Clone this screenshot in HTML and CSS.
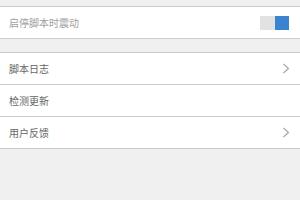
FILE: index.html
```html
<!DOCTYPE html>
<html>
<head>
<meta charset="utf-8">
<link rel="stylesheet" href="styles.css">
</head>
<body>
<div class="page">
  <div class="group">
    <div class="row">
      <span class="label muted">启停脚本时震动</span>
      <span class="toggle"><span class="knob"></span></span>
    </div>
  </div>
  <div class="group">
    <div class="row">
      <span class="label">脚本日志</span>
      <svg class="chev" width="8" height="11" viewBox="0 0 8 11"><path d="M1.5 1 L6.5 5.5 L1.5 10" fill="none" stroke="#a8a8a8" stroke-width="1.2"/></svg>
    </div>
    <div class="row">
      <span class="label">检测更新</span>
    </div>
    <div class="row">
      <span class="label">用户反馈</span>
      <svg class="chev" width="8" height="11" viewBox="0 0 8 11"><path d="M1.5 1 L6.5 5.5 L1.5 10" fill="none" stroke="#a8a8a8" stroke-width="1.2"/></svg>
    </div>
  </div>
</div>
</body>
</html>
```
FILE: styles.css
```css
html, body {
  margin: 0;
  padding: 0;
  background: #f0f0f0;
}
body {
  font-family: "Noto Sans CJK SC", "Noto Sans", sans-serif;
  width: 300px;
  height: 200px;
  overflow: hidden;
}
.page {
  padding-top: 6px;
  display: flex;
  flex-direction: column;
  gap: 13px;
}
.group {
  background: #fff;
  border-top: 1px solid #cccccc;
}
.row {
  height: 31px;
  border-bottom: 1px solid #cccccc;
  display: flex;
  align-items: center;
  justify-content: space-between;
  padding: 0 10px 0 9px;
}
.label {
  font-size: 10px;
  color: #666;
  line-height: 1;
}
.label.muted {
  color: #a0a0a0;
}
.toggle {
  width: 29px;
  height: 14px;
  background: #e2e2e2;
  display: flex;
  justify-content: flex-end;
  margin-right: 1px;
}
.knob {
  width: 14px;
  height: 14px;
  background: #3b82d0;
}
.chev {
  display: block;
}
```
